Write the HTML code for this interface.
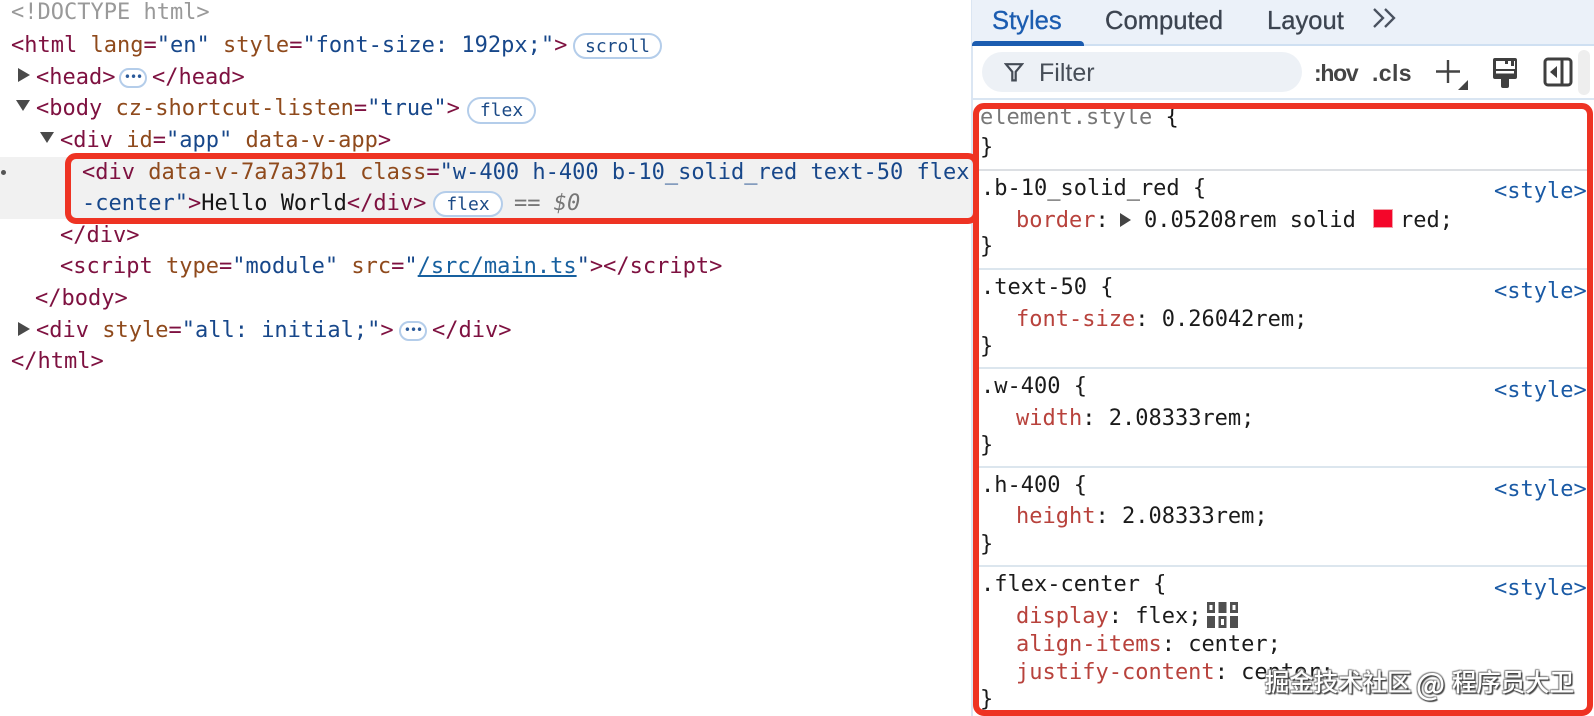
<!DOCTYPE html>
<html lang="en"><head><meta charset="utf-8"><title>DevTools</title>
<style>
html,body{margin:0;padding:0;background:#fff}
body{width:1594px;height:716px;overflow:hidden;position:relative;font-family:"DejaVu Sans Mono","Liberation Mono",monospace;font-size:22px;color:#1b1b1b}
.l,.s{position:absolute;white-space:pre;line-height:32px;height:32px}
.s{font-size:22px}
.t{color:#7e1140}.a{color:#8f4a1c}.v{color:#17478a}.g{color:#999}.p{color:#b8423c}.k{color:#161616}
.b{position:absolute;box-sizing:border-box;border:2px solid #b4cdea;border-radius:14px;color:#1b4a86;font-size:18px;text-align:center;background:#fff}
.d{font-size:12px;line-height:15px;letter-spacing:-1px;font-family:"DejaVu Sans",sans-serif;color:#2a5a9a}
.tri{position:absolute;width:0;height:0}
.tab{position:absolute;top:1px;font:500 25.6px/40px "Liberation Sans",sans-serif;color:#3c4450;white-space:pre;-webkit-text-stroke:.3px currentColor}
.sep{position:absolute;left:978px;width:610px;height:2px;background:#dce6ee}
.st{position:absolute;left:1494px;font-size:22px;line-height:32px;color:#1a5aa5;white-space:pre}
.red{position:absolute;box-sizing:border-box;border:6px solid #ee3323;border-radius:11px}
.w{position:absolute;top:664px;white-space:pre;font:500 24.4px/36px 'Noto Sans CJK SC','Liberation Sans',sans-serif;color:#fff;text-shadow:1.5px 1.5px 1px #444,-1px -1px 1px #888,1px -1px 1px #999,-1px 1px 1px #888}
</style></head><body>

<div style="position:absolute;left:0;top:157px;width:972px;height:62px;background:#f1f1f1"></div>
<div style="position:absolute;left:1px;top:170px;width:5px;height:5px;border-radius:50%;background:#555"></div>

<div class="l g" style="left:11px;top:-3px">&lt;!DOCTYPE html&gt;</div>
<div class="l" style="left:11px;top:30px"><span class="t">&lt;html</span> <span class="a">lang</span><span class="t">=</span><span class="v">"en"</span> <span class="a">style</span><span class="t">=</span><span class="v">"font-size: 192px;"</span><span class="t">&gt;</span></div>
<div class="b" style="left:573px;top:33px;width:89px;height:26px;line-height:23px">scroll</div>

<div class="tri" style="left:18px;top:68px;border-left:12px solid #4a4a4a;border-top:7.5px solid transparent;border-bottom:7.5px solid transparent"></div>
<div class="l" style="left:36px;top:62px"><span class="t">&lt;head&gt;</span></div>
<div class="b d" style="left:119px;top:68px;width:28px;height:20px">•••</div>
<div class="l" style="left:152px;top:62px"><span class="t">&lt;/head&gt;</span></div>

<div class="tri" style="left:16px;top:100px;border-top:11px solid #4a4a4a;border-left:7.5px solid transparent;border-right:7.5px solid transparent"></div>
<div class="l" style="left:36px;top:93px"><span class="t">&lt;body</span> <span class="a">cz-shortcut-listen</span><span class="t">=</span><span class="v">"true"</span><span class="t">&gt;</span></div>
<div class="b" style="left:467px;top:97px;width:69px;height:27px;line-height:24px">flex</div>

<div class="tri" style="left:40px;top:132px;border-top:11px solid #4a4a4a;border-left:7.5px solid transparent;border-right:7.5px solid transparent"></div>
<div class="l" style="left:60px;top:125px"><span class="t">&lt;div</span> <span class="a">id</span><span class="t">=</span><span class="v">"app"</span> <span class="a">data-v-app</span><span class="t">&gt;</span></div>

<div class="l" style="left:82px;top:157px"><span class="t">&lt;div</span> <span class="a">data-v-7a7a37b1</span> <span class="a">class</span><span class="t">=</span><span class="v">"w-400 h-400 b-10_solid_red text-50 flex</span></div>
<div class="l" style="left:82px;top:188px"><span class="v">-center"</span><span class="t">&gt;</span><span class="k">Hello World</span><span class="t">&lt;/div&gt;</span></div>
<div class="b" style="left:433px;top:191px;width:70px;height:26px;line-height:23px;background:#fff">flex</div>
<div class="l" style="left:514px;top:188px;color:#777">== <i>$0</i></div>

<div class="l" style="left:60px;top:220px"><span class="t">&lt;/div&gt;</span></div>
<div class="l" style="left:60px;top:251px"><span class="t">&lt;script</span> <span class="a">type</span><span class="t">=</span><span class="v">"module"</span> <span class="a">src</span><span class="t">=</span><span class="v">"<u style="color:#17609f">/src/main.ts</u>"</span><span class="t">&gt;&lt;/script&gt;</span></div>
<div class="l" style="left:35px;top:283px"><span class="t">&lt;/body&gt;</span></div>
<div class="tri" style="left:18px;top:322px;border-left:12px solid #4a4a4a;border-top:7.5px solid transparent;border-bottom:7.5px solid transparent"></div>
<div class="l" style="left:36px;top:315px"><span class="t">&lt;div</span> <span class="a">style</span><span class="t">=</span><span class="v">"all: initial;"</span><span class="t">&gt;</span></div>
<div class="b d" style="left:399px;top:321px;width:28px;height:20px">•••</div>
<div class="l" style="left:432px;top:315px"><span class="t">&lt;/div&gt;</span></div>
<div class="l" style="left:11px;top:346px"><span class="t">&lt;/html&gt;</span></div>

<!-- right panel -->
<div style="position:absolute;left:971px;top:0;width:623px;height:716px;background:#fff;border-left:2px solid #dbe6f3;box-sizing:border-box"></div>
<div style="position:absolute;left:972px;top:0;width:622px;height:44px;background:#ebf1f9;border-bottom:2px solid #cfe0f2"></div>
<div style="position:absolute;left:972px;top:41px;width:112px;height:5px;background:#1b5cb0;border-radius:4px 4px 0 0"></div>
<div class="tab" style="left:992px;color:#1b5cb0">Styles</div>
<div class="tab" style="left:1105px">Computed</div>
<div class="tab" style="left:1267px">Layout</div>
<svg style="position:absolute;left:1372px;top:7px" width="26" height="22" viewBox="0 0 26 22" fill="none" stroke="#4a5260" stroke-width="2.3"><path d="M2 2l9 9-9 9M13 2l9 9-9 9"/></svg>

<div style="position:absolute;left:982px;top:52px;width:320px;height:40px;border-radius:20px;background:#edf1f6"></div>
<svg style="position:absolute;left:1004px;top:62px" width="20" height="20" viewBox="0 0 20 20" fill="none" stroke="#444b55" stroke-width="2.2"><path d="M2 2.200h16l-6.300 7.600v8.600h-3.400V9.800z"/></svg>
<div style="position:absolute;left:1039px;top:53px;font:25px/40px 'Liberation Sans',sans-serif;color:#474e58">Filter</div>
<div style="position:absolute;left:1314px;top:53px;font:bold 23px/40px 'Liberation Sans',sans-serif;letter-spacing:-1.3px;color:#444">:hov</div>
<div style="position:absolute;left:1372px;top:53px;font:bold 23px/40px 'Liberation Sans',sans-serif;letter-spacing:.4px;color:#444">.cls</div>
<svg style="position:absolute;left:1434px;top:58px" width="36" height="33" viewBox="0 0 36 33"><path d="M14 2v23M2 13.500h24" stroke="#444" stroke-width="2.400" fill="none"/><path d="M34 22v10H24z" fill="#444"/></svg>
<svg style="position:absolute;left:1492px;top:57px" width="26" height="32" viewBox="0 0 26 32"><path d="M3 1h20a2 2 0 0 1 2 2v17a2 2 0 0 1-2 2h-6v7a2 2 0 0 1-2 2h-4a2 2 0 0 1-2-2v-7H3a2 2 0 0 1-2-2V3a2 2 0 0 1 2-2z" fill="#3f3f3f"/><path d="M4 4h9v3h3V4h3v5h3V4h1v8H4z" fill="#fff"/><path d="M4 14h18v2.500H4z" fill="#fff"/></svg>
<svg style="position:absolute;left:1543px;top:57px" width="30" height="30" viewBox="0 0 30 30"><rect x="2" y="2" width="26" height="26" rx="3" fill="none" stroke="#3f3f3f" stroke-width="3"/><path d="M19 2v26" stroke="#3f3f3f" stroke-width="3"/><path d="M14 9v12l-7-6z" fill="#3f3f3f"/></svg>
<div style="position:absolute;left:1578px;top:50px;width:12px;height:45px;border-radius:6px;background:#eeeeee"></div>
<div style="position:absolute;left:972px;top:98px;width:622px;height:2px;background:#d9e5f2"></div>

<div class="s g" style="left:980px;top:102px;color:#777">element.style <span class="k">{</span></div>
<div class="s" style="left:980px;top:132px">}</div>
<div class="sep" style="top:169px;background:#dcdfe3"></div>

<div class="s" style="left:981px;top:173px">.b-10_solid_red {</div>
<div class="st" style="top:176px">&lt;style&gt;</div>
<div class="s" style="left:1016px;top:205px"><span class="p">border</span>:</div>
<div class="tri" style="left:1120px;top:213px;border-left:11px solid #444;border-top:7px solid transparent;border-bottom:7px solid transparent"></div>
<div class="s" style="left:1144px;top:205px">0.05208rem solid</div>
<div style="position:absolute;left:1373px;top:209px;width:20px;height:19px;background:#f4062a;border:1px solid #f2a0a8;box-sizing:border-box"></div>
<div class="s" style="left:1400px;top:205px">red;</div>
<div class="s" style="left:980px;top:231px">}</div>
<div class="sep" style="top:268px"></div>

<div class="s" style="left:981px;top:272px">.text-50 {</div>
<div class="st" style="top:276px">&lt;style&gt;</div>
<div class="s" style="left:1016px;top:304px"><span class="p">font-size</span>: 0.26042rem;</div>
<div class="s" style="left:980px;top:331px">}</div>
<div class="sep" style="top:367px"></div>

<div class="s" style="left:981px;top:371px">.w-400 {</div>
<div class="st" style="top:375px">&lt;style&gt;</div>
<div class="s" style="left:1016px;top:403px"><span class="p">width</span>: 2.08333rem;</div>
<div class="s" style="left:980px;top:430px">}</div>
<div class="sep" style="top:466px"></div>

<div class="s" style="left:981px;top:470px">.h-400 {</div>
<div class="st" style="top:474px">&lt;style&gt;</div>
<div class="s" style="left:1016px;top:501px"><span class="p">height</span>: 2.08333rem;</div>
<div class="s" style="left:980px;top:529px">}</div>
<div class="sep" style="top:565px"></div>

<div class="s" style="left:981px;top:569px">.flex-center {</div>
<div class="st" style="top:573px">&lt;style&gt;</div>
<div class="s" style="left:1016px;top:601px"><span class="p">display</span>: flex;</div>
<svg style="position:absolute;left:1207px;top:602px" width="31" height="26" viewBox="0 0 31 26"><g fill="#4f4f4f"><path fill-rule="evenodd" d="M0 0h8v11H0zM2.500 3v5h3V3z"/><path d="M11.500 0h8v11h-8z"/><path fill-rule="evenodd" d="M23 0h8v11h-8zM25.500 3v5h3V3z"/><path d="M0 14h8v12H0z"/><path fill-rule="evenodd" d="M11.500 14h8v12h-8zM14 17v6h3v-6z"/><path d="M23 14h8v12h-8z"/></g></svg>
<div class="s" style="left:1016px;top:629px"><span class="p">align-items</span>: center;</div>
<div class="s" style="left:1016px;top:657px"><span class="p">justify-content</span>: center;</div>
<div class="s" style="left:980px;top:684px">}</div>

<div class="red" style="left:65px;top:153px;width:914px;height:71px"></div>
<div class="red" style="left:973px;top:103px;width:620px;height:613px"></div>

<div class="w" style="left:1265px">掘金技术社区</div>
<div class="w" style="left:1416px;font-size:30px;line-height:36px">@</div>
<div class="w" style="left:1452px">程序员大卫</div>
</body></html>
